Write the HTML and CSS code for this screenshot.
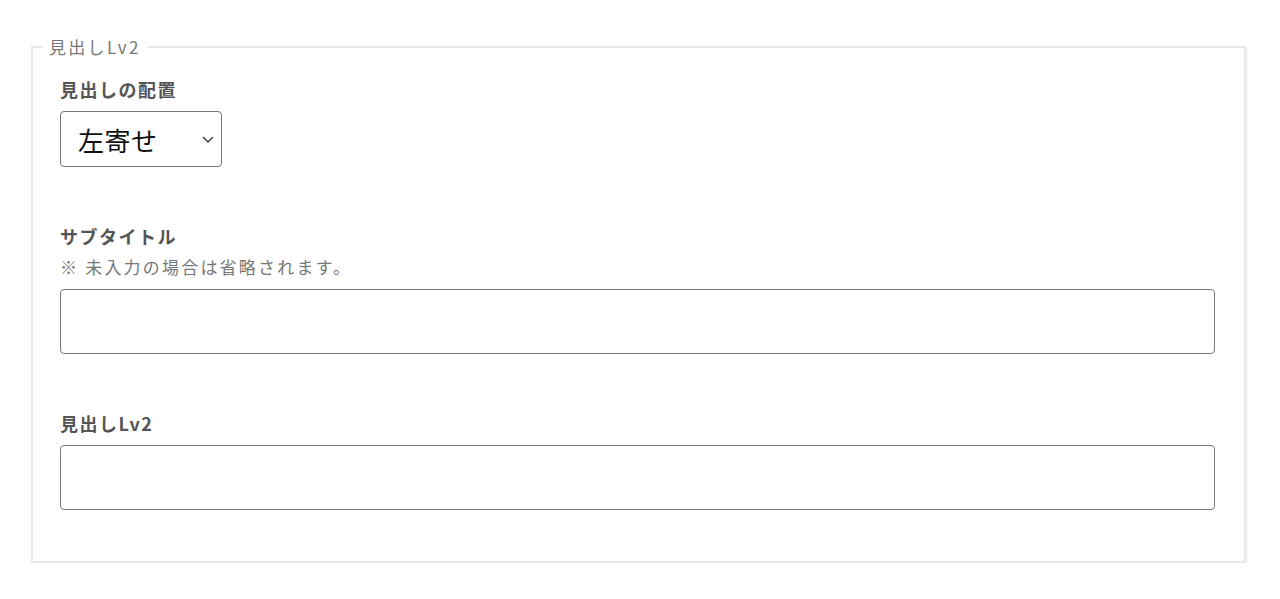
FILE: index.html
```html
<!DOCTYPE html>
<html lang="ja">
<head>
    <meta charset="UTF-8">
    <meta name="viewport" content="width=device-width, initial-scale=1.0">
    <title>見出しLv2</title>
    <link rel="stylesheet" href="styles.css">
</head>
<body>

    <fieldset class="panel">
        <legend>見出しLv2</legend>
        <div class="panel-body">

            <div class="field">
                <label class="field-label" for="align">見出しの配置</label>
                <div class="select-wrap">
                    <select id="align" class="select">
                        <option>左寄せ</option>
                        <option>中央</option>
                        <option>右寄せ</option>
                    </select>
                    <svg class="chevron" width="12" height="7" viewBox="0 0 12 7">
                        <path d="M1 1 L6 6 L11 1" fill="none" stroke="#333" stroke-width="1.3"/>
                    </svg>
                </div>
            </div>

            <div class="field">
                <label class="field-label" for="subtitle">サブタイトル</label>
                <p class="note">※ 未入力の場合は省略されます。</p>
                <input type="text" id="subtitle" class="text-input">
            </div>

            <div class="field">
                <label class="field-label" for="heading">見出しLv2</label>
                <input type="text" id="heading" class="text-input">
            </div>

        </div>
    </fieldset>

</body>
</html>
```

FILE: styles.css
```css
body {
    font-family: 'Noto Sans CJK JP', 'Noto Sans', sans-serif;
    background-color: #fff;
    margin: 0;
    color: #333;
}

/* Panel */
.panel {
    margin: 36px 34px 0 31px;
    padding: 0 10px;
    border: 2px solid #e8e8e8;
    box-shadow: 1px 2px 3px rgba(0, 0, 0, 0.08);
}

.panel legend {
    padding: 0 6px;
    font-size: 17px;
    line-height: 22px;
    letter-spacing: 2.3px;
    color: #777;
}

.panel-body {
    padding: 19px 19px 51px 17px;
}

.field + .field {
    margin-top: 57px;
}

.field-label {
    display: block;
    font-size: 18px;
    font-weight: bold;
    line-height: 24px;
    letter-spacing: 1.5px;
    color: #555;
    margin-bottom: 10px;
}

.note {
    font-size: 17px;
    line-height: 24px;
    letter-spacing: 2.2px;
    color: #777;
    margin: -3px 0 10px;
}

/* Select */
.select-wrap {
    position: relative;
    width: 162px;
}

.select {
    appearance: none;
    -webkit-appearance: none;
    display: block;
    width: 162px;
    height: 56px;
    padding: 0 0 0 17px;
    font-family: inherit;
    font-size: 26px;
    letter-spacing: 0.5px;
    color: #111;
    background: #fff;
    border: 1px solid #777;
    border-radius: 4px;
}

.chevron {
    position: absolute;
    right: 8px;
    top: 25px;
    pointer-events: none;
}

/* Text inputs */
.text-input {
    display: block;
    box-sizing: border-box;
    width: 100%;
    height: 65px;
    padding: 0 12px;
    font-family: inherit;
    font-size: 18px;
    border: 1px solid #777;
    border-radius: 4px;
}
```
